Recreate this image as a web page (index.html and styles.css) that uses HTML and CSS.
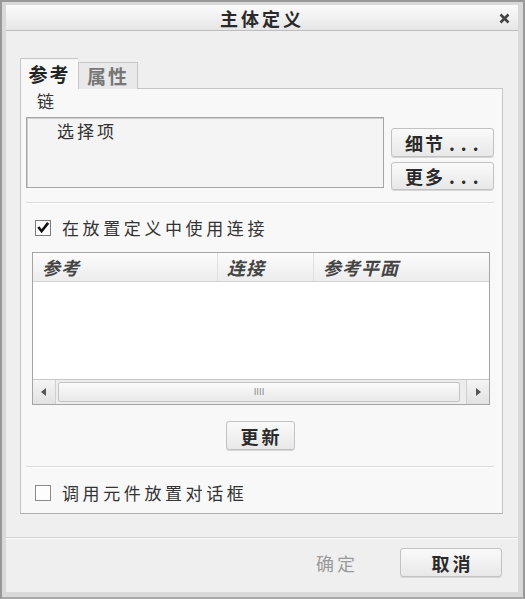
FILE: index.html
```html
<!DOCTYPE html>
<html lang="zh">
<head>
  <meta charset="UTF-8">
  <title>主体定义</title>
  <link rel="stylesheet" href="styles.css">
</head>
<body>
  <div class="window">
    <div class="dialog">
      <div class="titlebar">
        <span class="title">主体定义</span>
        <svg class="close" width="11" height="11" viewBox="0 0 11 11">
          <path d="M1.5 1.5 L9.5 9.5 M9.5 1.5 L1.5 9.5" stroke="#444" stroke-width="2.6"/>
        </svg>
      </div>

      <div class="content">
        <div class="tabs">
          <div class="tab active">参考</div>
          <div class="tab">属性</div>
        </div>
        <div class="panel">
          <div class="label">链</div>
          <div class="chain-row">
            <div class="listbox">选择项</div>
            <div class="side-buttons">
              <button class="btn">细节<span class="dots">...</span></button>
              <button class="btn btn-short">更多<span class="dots">...</span></button>
            </div>
          </div>

          <div class="sep sep-first"></div>

          <div class="check-row">
            <span class="checkbox">
              <svg width="15" height="15" viewBox="0 0 15 15">
                <path d="M2.5 7 L6 11.5 L13 2.5" fill="none" stroke="#111" stroke-width="2.8"/>
              </svg>
            </span>
            <span class="check-text">在放置定义中使用连接</span>
          </div>

          <div class="table">
            <div class="thead">
              <div class="th col-ref">参考</div>
              <div class="th col-conn">连接</div>
              <div class="th col-plane">参考平面</div>
            </div>
            <div class="tbody"></div>
            <div class="hscroll">
              <div class="sb-btn">
                <svg width="6" height="8" viewBox="0 0 6 8"><path d="M5 0 L5 8 L0 4 Z" fill="#555"/></svg>
              </div>
              <div class="sb-thumb"><span class="grip">IIII</span></div>
              <div class="sb-track"></div>
              <div class="sb-btn">
                <svg width="6" height="8" viewBox="0 0 6 8"><path d="M1 0 L1 8 L6 4 Z" fill="#555"/></svg>
              </div>
            </div>
          </div>

          <div class="update-row">
            <button class="btn btn-update">更新</button>
          </div>

          <div class="sep sep-second"></div>

          <div class="check-row check-row-last">
            <span class="checkbox"></span>
            <span class="check-text">调用元件放置对话框</span>
          </div>
        </div>
      </div>

      <div class="footer">
        <button class="btn btn-flat">确定</button>
        <button class="btn btn-footer">取消</button>
      </div>
    </div>
  </div>
</body>
</html>
```

FILE: styles.css
```css
body {
  margin: 0;
  font-family: "Noto Sans CJK SC", "Noto Sans", sans-serif;
  background: #cfcfcf;
}
.window {
  width: 525px;
  height: 599px;
  box-sizing: border-box;
  border: 2px solid #989898;
  border-bottom-color: #a8a8a8;
  background: #d9d9d9;
  padding: 3px 5px 5px 4px;
}
.dialog {
  height: 100%;
  background: #efefef;
  display: flex;
  flex-direction: column;
}
.titlebar {
  height: 25px;
  flex: none;
  background: linear-gradient(#fbfbfb, #e6e6e6);
  border-bottom: 1px solid #bcbcbc;
  display: flex;
  align-items: center;
  justify-content: center;
  position: relative;
}
.title {
  font-size: 18px;
  font-weight: 700;
  letter-spacing: 3px;
  color: #2a2a2a;
  line-height: 1;
}
.close {
  position: absolute;
  right: 8px;
  top: 8px;
}
.content {
  flex: none;
  padding: 27px 15px 0 14px;
}
.tabs {
  display: flex;
  align-items: flex-end;
  height: 31px;
  margin-bottom: -1px;
  position: relative;
}
.tab {
  box-sizing: border-box;
  height: 27px;
  width: 60px;
  border: 1px solid #c6c6c6;
  border-bottom: none;
  background: #e9e9e9;
  font-size: 19px;
  font-weight: 700;
  letter-spacing: 2px;
  color: #777;
  line-height: 25px;
  text-align: center;
}
.tab.active {
  height: 31px;
  width: 58px;
  background: #f8f8f8;
  color: #222;
  line-height: 30px;
  border-right: none;
}
.panel {
  box-sizing: border-box;
  height: 426px;
  background: #f8f8f8;
  border: 1px solid #c4c4c4;
  border-bottom-color: #b0b0b0;
  padding: 0 8px 0 5px;
}
.label {
  margin-top: 3px;
  height: 18px;
  line-height: 18px;
  font-size: 17px;
  color: #333;
  padding-left: 11px;
}
.chain-row {
  margin-top: 7px;
  display: flex;
  gap: 7px;
}
.listbox {
  box-sizing: border-box;
  width: 358px;
  height: 71px;
  border: 1px solid #a6a6a6;
  box-shadow: inset 1px 1px 0 #cfcfcf;
  background: #f4f4f4;
  font-size: 17px;
  letter-spacing: 3px;
  color: #333;
  padding: 3px 0 0 30px;
  line-height: 20px;
}
.side-buttons {
  margin-top: 11px;
  display: flex;
  flex-direction: column;
  gap: 5px;
}
.btn {
  box-sizing: border-box;
  font-family: inherit;
  font-size: 18px;
  font-weight: 700;
  letter-spacing: 2px;
  color: #2a2a2a;
  border: 1px solid #c2c2c2;
  border-radius: 3px;
  background: linear-gradient(#fafafa, #e8e8e8);
  box-shadow: 0 1px 0 #d6d6d6;
  padding: 0;
  line-height: 1;
}
.side-buttons .btn {
  width: 103px;
  height: 29px;
  text-align: left;
  padding-left: 13px;
}
.side-buttons .btn-short {
  height: 28px;
}
.dots {
  letter-spacing: 6px;
  margin-left: 4px;
}
.sep {
  height: 1px;
  background: #dadada;
  border-bottom: 1px solid #ffffff;
}
.sep-first {
  margin-top: 12px;
}
.check-row {
  margin-top: 14px;
  height: 20px;
  display: flex;
  align-items: center;
  padding-left: 9px;
}
.checkbox {
  box-sizing: border-box;
  width: 16px;
  height: 16px;
  border: 1px solid #7a7a7a;
  background: #fdfdfd;
  display: flex;
  align-items: center;
  justify-content: center;
  margin-right: 11px;
}
.checkbox svg {
  margin-top: -1px;
}
.check-text {
  font-size: 17px;
  letter-spacing: 3.6px;
  color: #333;
  line-height: 20px;
}
.table {
  box-sizing: border-box;
  margin: 14px 0 0 6px;
  width: 458px;
  height: 153px;
  border: 1px solid #a4a4a4;
  background: #ffffff;
  display: flex;
  flex-direction: column;
}
.thead {
  display: flex;
  height: 28px;
  flex: none;
  background: linear-gradient(#fcfcfc, #ececec);
  border-bottom: 1px solid #d2d2d2;
}
.th {
  box-sizing: border-box;
  font-size: 18px;
  font-weight: 700;
  font-style: italic;
  color: #444;
  line-height: 28px;
  padding-left: 9px;
  letter-spacing: 1px;
  border-right: 1px solid #e0e0e0;
}
.col-ref {
  width: 185px;
}
.col-conn {
  width: 96px;
}
.col-plane {
  flex: 1;
  border-right: none;
}
.tbody {
  flex: 1;
}
.hscroll {
  flex: none;
  height: 24px;
  border-top: 1px solid #c8c8c8;
  background: #ededed;
  display: flex;
  align-items: stretch;
}
.sb-btn {
  width: 22px;
  display: flex;
  align-items: center;
  justify-content: center;
  background: linear-gradient(#f4f4f4, #e2e2e2);
  border-right: 1px solid #d0d0d0;
}
.sb-btn:last-child {
  border-right: none;
  border-left: 1px solid #d0d0d0;
}
.sb-thumb {
  width: 400px;
  margin: 2px 0 2px 2px;
  border: 1px solid #c4c4c4;
  border-radius: 2px;
  background: linear-gradient(#fbfbfb, #e9e9e9);
  display: flex;
  align-items: center;
  justify-content: center;
}
.grip {
  font-family: "DejaVu Sans", sans-serif;
  font-size: 9px;
  color: #888;
  letter-spacing: 0;
}
.sb-track {
  flex: 1;
}
.update-row {
  margin-top: 16px;
  display: flex;
  justify-content: center;
}
.btn-update {
  width: 69px;
  height: 29px;
  letter-spacing: 3px;
  padding-left: 3px;
}
.sep-second {
  margin-top: 16px;
}
.check-row-last {
  margin-top: 15px;
}
.check-row-last .checkbox {
  border-color: #8a8a8a;
}
.footer {
  flex: 1;
  border-top: 1px solid #d4d4d4;
  margin-top: 23px;
  box-shadow: inset 0 1px 0 #fafafa;
  display: flex;
  justify-content: flex-end;
  align-items: flex-start;
  padding: 10px 16px 0 0;
  gap: 12px;
}
.btn-flat {
  width: 102px;
  height: 29px;
  border-color: transparent;
  background: transparent;
  box-shadow: none;
  font-weight: 400;
  color: #9a9a9a;
  letter-spacing: 3px;
}
.btn-footer {
  width: 102px;
  height: 29px;
  letter-spacing: 3px;
  padding-left: 3px;
}
```
